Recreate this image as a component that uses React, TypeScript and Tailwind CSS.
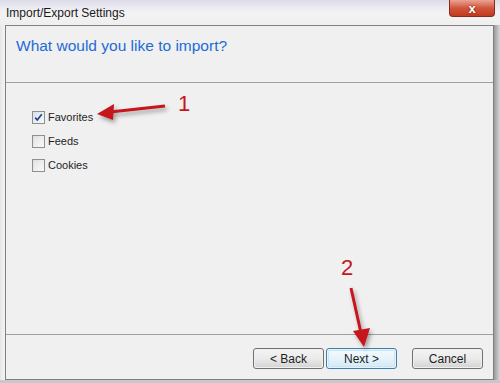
import React from 'react';

const font = { fontFamily: '"Liberation Sans", Arial, sans-serif' };

const Checkbox: React.FC<{ checked?: boolean; label: string }> = ({ checked, label }) => (
  <label className="flex items-center gap-[3px] h-[13px] text-[11px] text-[#1e1e1e]">
    <span className="relative w-[13px] h-[13px] border border-[#8e8f8f] bg-gradient-to-br from-[#dcdcdc] to-[#fbfbfb] flex items-center justify-center">
      <span
        className={`w-[9px] h-[9px] bg-gradient-to-br flex items-center justify-center ${
          checked ? 'from-[#d6e4f2] to-[#f4f8fc]' : 'from-[#e4e4e4] to-[#f8f8f8]'
        }`}
      >
        {checked && (
          <svg width="9" height="9" viewBox="0 0 9 9">
            <path d="M1.2 4.6 L3.3 7 L7.8 1.3" fill="none" stroke="#2c3f86" strokeWidth="1.7" />
          </svg>
        )}
      </span>
    </span>
    <span>{label}</span>
  </label>
);

const Button: React.FC<{ label: string; primary?: boolean }> = ({ label, primary }) => (
  <button
    className={`w-[71px] h-[21px] rounded-[3px] border text-[12px] text-[#1e1e1e] p-[1px] ${
      primary ? 'border-[#3c7fb1]' : 'border-[#707070]'
    }`}
  >
    <span
      className={`flex items-center justify-center w-full h-full rounded-[2px] bg-gradient-to-b ${
        primary
          ? 'from-[#f4fafe] via-[#e6f3fb] to-[#d2ebf9] shadow-[inset_0_0_0_1px_#c6e6f8]'
          : 'from-[#f2f2f2] via-[#ebebeb] to-[#d5d5d5]'
      }`}
    >
      {label}
    </span>
  </button>
);

export default function App() {
  return (
    <div className="relative w-[500px] h-[383px] overflow-hidden bg-[#c8c8cc]" style={font}>
      {/* title bar */}
      <div className="h-[25px] flex items-center px-[6px] bg-gradient-to-b from-[#dcdce8] via-[#f3f3f5] to-[#efefef]">
        <span className="text-[12px] text-[#1a1a1a] pt-[1px]">Import/Export Settings</span>
      </div>

      <div className="flex h-[355px]">
        <div className="w-[5px] bg-gradient-to-r from-[#e6e6e6] to-[#f4f4f4]" />
        {/* dialog body */}
        <div className="w-[489px] flex flex-col border border-[#7f7f7f] bg-[#f0f0f0]">
          <div className="h-[57px] border-b border-[#a0a0a0] px-[10px] pt-[8px]">
            <h1 className="text-[15.5px] text-[#1e6bd8]">What would you like to import?</h1>
          </div>
          <div className="flex-1 flex flex-col gap-[11px] pl-[26px] pt-[28px]">
            <Checkbox checked label="Favorites" />
            <Checkbox label="Feeds" />
            <Checkbox label="Cookies" />
          </div>
          <div className="h-[45px] border-t border-[#a0a0a0] flex justify-end items-start gap-[2px] pr-[10px] pt-[13px]">
            <Button label="< Back" />
            <Button label="Next >" primary />
            <div className="w-[11px]" />
            <Button label="Cancel" />
          </div>
        </div>
        <div className="flex-1 bg-gradient-to-r from-[#9a9a9a] to-[#d8d8d8]" />
      </div>

      {/* close button */}
      <div className="absolute right-[5px] top-0 w-[46px] h-[17px] rounded-b-[4px] border border-t-0 border-[#8a2a1e] bg-gradient-to-b from-[#e8a493] via-[#d2543c] to-[#c0391f] flex items-center justify-center">
        <span className="text-white text-[13px] font-bold leading-none [text-shadow:0_0_2px_#5a1a10]">x</span>
      </div>

      {/* annotations */}
      <svg className="absolute left-0 top-0" width="500" height="383" viewBox="0 0 500 383">
        <defs>
          <filter id="sh" x="-20%" y="-20%" width="140%" height="140%">
            <feDropShadow dx="2" dy="3" stdDeviation="2" floodColor="#000" floodOpacity="0.35" />
          </filter>
        </defs>
        <g filter="url(#sh)" fill="#c4161c" stroke="#c4161c">
          <line x1="165" y1="106" x2="110" y2="112" strokeWidth="3" />
          <polygon points="97,114 114,104 113,120" stroke="none" />
          <line x1="351" y1="288" x2="361" y2="333" strokeWidth="3" />
          <polygon points="364,347 353,331 370,328" stroke="none" />
        </g>
      </svg>
      <span className="absolute left-[178px] top-[93px] text-[22px] leading-none text-[#c4161c]">1</span>
      <span className="absolute left-[341px] top-[257px] text-[22px] leading-none text-[#c4161c]">2</span>
    </div>
  );
}
